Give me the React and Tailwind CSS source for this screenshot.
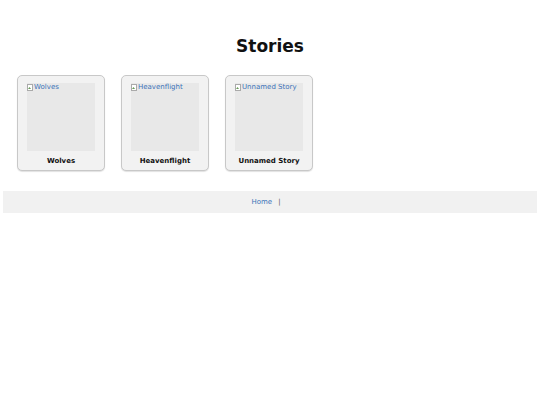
import React from 'react';

const stories = ['Wolves', 'Heavenflight', 'Unnamed Story'];

const BrokenImage = ({ alt }) => (
  <div className="w-[68px] h-[68px] bg-[#e8e8e8] flex items-start">
    <span className="flex items-center text-[7px] leading-[9px] text-[#3b73b9]">
      <svg width="6" height="7" viewBox="0 0 6 7" className="mr-px">
        <rect x="0.5" y="0.5" width="5" height="6" fill="#fff" stroke="#aaa" strokeWidth="1" />
        <path d="M1 5 L2.5 3 L4 5 Z" fill="#6a9c5a" />
      </svg>
      {alt}
    </span>
  </div>
);

const App = () => {
  return (
    <div className="min-h-[405px] bg-white px-[3px] pt-[34px] font-['DejaVu_Sans',sans-serif] text-[#111]">
      <h1 className="text-center text-[17px] font-bold leading-6">Stories</h1>

      {/* Story cards */}
      <div className="flex gap-4 px-[14px] mt-[17px]">
        {stories.map((s) => (
          <a
            key={s}
            href="#"
            className="w-[88px] h-[96px] border border-[#c8c8c8] rounded-[5px] bg-[#f2f2f2] shadow-[0_1px_1px_rgba(0,0,0,0.12)] flex flex-col items-center pt-[7px]"
          >
            <BrokenImage alt={s} />
            <span className="mt-[5px] text-[7px] font-bold text-[#111]">{s}</span>
          </a>
        ))}
      </div>

      {/* Footer */}
      <div className="mt-5 h-[22px] bg-[#f1f1f1] flex items-center justify-center pr-[8px] text-[7px]">
        <a href="#" className="text-[#3b73b9]">Home</a>
        <span className="ml-[6px] text-[#555]">|</span>
      </div>
    </div>
  );
};

export default App;
